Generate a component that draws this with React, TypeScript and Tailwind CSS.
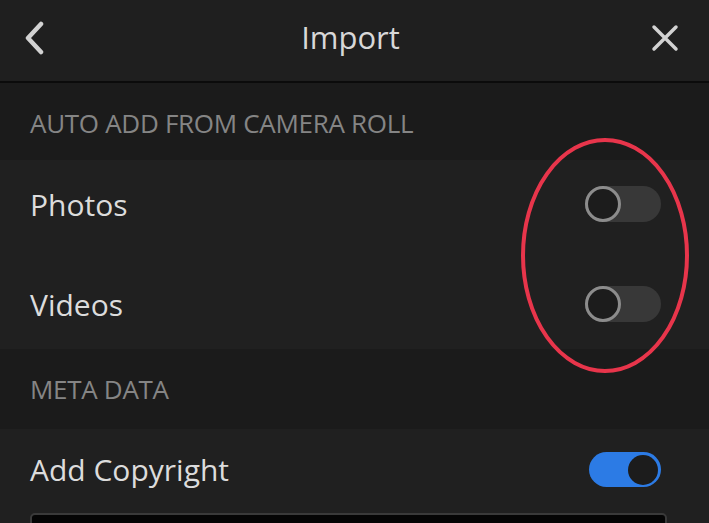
import React from "react";

function OffToggle() {
  return (
    <div className="relative w-[76px] h-[36px] rounded-full bg-[#383838]">
      <div className="absolute left-0 top-0 w-[36px] h-[36px] rounded-full border-[3px] border-[#8c8c8c] bg-[#1c1c1c]" />
    </div>
  );
}

function OnToggle() {
  return (
    <div className="flex items-center justify-end w-[72px] h-[35px] rounded-full bg-[#2c7be5] pr-[3px]">
      <div className="w-[30px] h-[30px] rounded-full bg-[#1c1c1c]" />
    </div>
  );
}

export default function App() {
  const font = { fontFamily: '"Open Sans", "Liberation Sans", sans-serif' };
  return (
    <div className="relative w-[709px] h-[523px] overflow-hidden bg-[#1f1f1f]" style={font}>
      {/* Header */}
      <div className="flex items-center justify-between h-[83px] pb-[6px] px-[24px] border-b-2 border-[#0b0b0b] bg-[#1f1f1f]">
        <svg width="22" height="34" viewBox="0 0 22 34">
          <path d="M17 3 L4 17 L17 31" fill="none" stroke="#d2d2d2" strokeWidth="4.5" strokeLinecap="round" strokeLinejoin="round" />
        </svg>
        <div className="text-[31px] text-[#d8d8d8] tracking-[0px] ml-[4px]">Import</div>
        <svg width="28" height="28" viewBox="0 0 28 28" className="mr-[6px]">
          <path d="M3 3 L25 25 M25 3 L3 25" fill="none" stroke="#d2d2d2" strokeWidth="3.5" strokeLinecap="round" />
        </svg>
      </div>

      {/* Section: Auto add */}
      <div className="flex items-center h-[77px] pl-[30px] pt-[4px] bg-[#1b1b1b]">
        <div className="text-[26px] text-[#858585] tracking-[-0.3px]">AUTO ADD FROM CAMERA ROLL</div>
      </div>
      <div className="flex flex-col gap-[64px] pt-[26px] pb-[27px] pl-[30px] pr-[48px] bg-[#202020]">
        <div className="flex items-center justify-between h-[36px]">
          <div className="text-[30px] text-[#dcdcdc] tracking-[0px]">Photos</div>
          <OffToggle />
        </div>
        <div className="flex items-center justify-between h-[36px]">
          <div className="text-[30px] text-[#dcdcdc] tracking-[0px]">Videos</div>
          <OffToggle />
        </div>
      </div>

      {/* Section: Meta data */}
      <div className="flex items-center h-[80px] pl-[30px] bg-[#1b1b1b]">
        <div className="text-[26px] text-[#858585] tracking-[-0.3px]">META DATA</div>
      </div>
      <div className="flex flex-col pt-[23px] bg-[#202020]">
        <div className="flex items-center justify-between h-[35px] pl-[30px] pr-[48px]">
          <div className="text-[30px] text-[#dcdcdc] tracking-[0px]">Add Copyright</div>
          <OnToggle />
        </div>
        <div className="ml-[30px] mr-[42px] mt-[26px] h-[40px] rounded-[5px] border-2 border-[#3a3a3a] bg-[#050505]" />
      </div>

      {/* Red annotation ellipse */}
      <svg className="absolute left-[520px] top-[137px]" width="170" height="237" viewBox="0 0 170 237">
        <ellipse cx="85" cy="118.5" rx="82" ry="115.5" fill="none" stroke="#e8354b" strokeWidth="4" />
      </svg>
    </div>
  );
}
